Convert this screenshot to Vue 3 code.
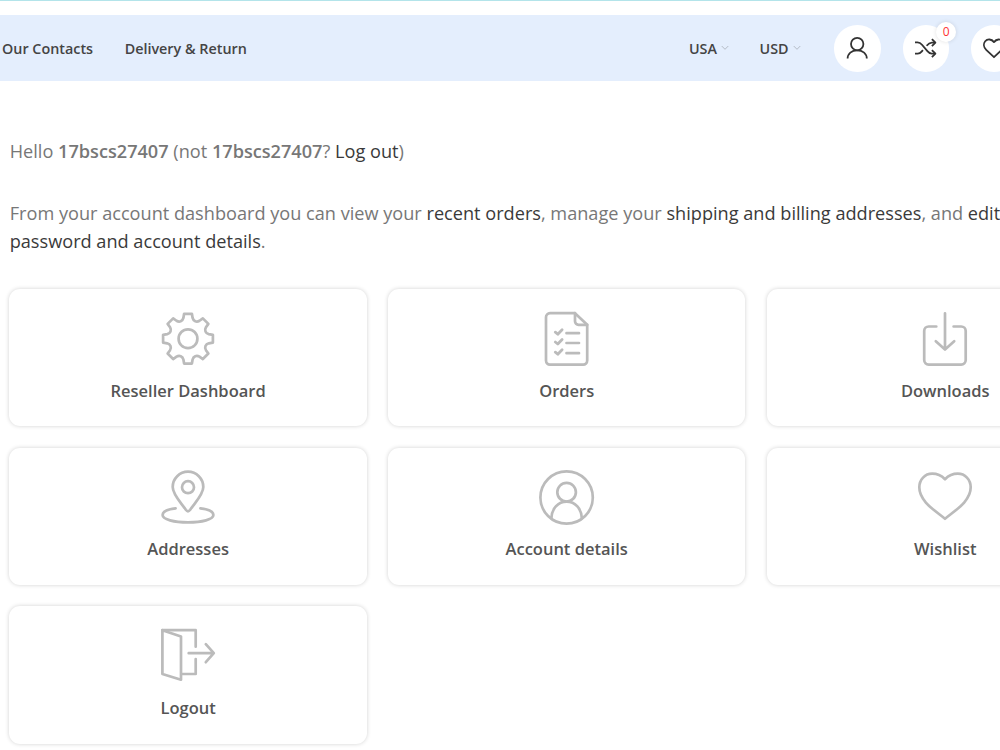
<script setup>
const navLinks = ['Our Contacts', 'Delivery & Return'];
const switchers = ['USA', 'USD'];

const cards = [
    { id: 'reseller', label: 'Reseller Dashboard' },
    { id: 'orders', label: 'Orders' },
    { id: 'downloads', label: 'Downloads' },
    { id: 'addresses', label: 'Addresses' },
    { id: 'account', label: 'Account details' },
    { id: 'wishlist', label: 'Wishlist' },
    { id: 'logout', label: 'Logout' }
];

// Outline of the gear: one tooth and one notch, repeated every 45 degrees
const gearPath = () => {
    const point = (x, y, step) => {
        const a = (step * Math.PI) / 4;
        const px = 30 + x * Math.cos(a) - y * Math.sin(a);
        const py = 29.7 + x * Math.sin(a) + y * Math.cos(a);
        return `${px.toFixed(2)} ${py.toFixed(2)}`;
    };
    let d = `M${point(-3.9, -24.9, 0)}`;
    for (let i = 0; i < 8; i++) {
        d += `L${point(3.9, -24.9, i)}L${point(4.6, -20.8, i)}`;
        d += `C${point(5.4, -17.5, i)} ${point(-5.4, -17.5, i + 1)} ${point(-4.6, -20.8, i + 1)}`;
        d += `L${point(-3.9, -24.9, i + 1)}`;
    }
    return d + 'Z';
};
</script>

<template>
    <div class="page">
        <div class="top-line"></div>

        <!-- Header -->
        <header class="header">
            <nav class="nav">
                <a v-for="link in navLinks" :key="link" href="#">{{ link }}</a>
            </nav>
            <div class="switchers">
                <a v-for="item in switchers" :key="item" href="#" class="switcher">
                    {{ item }}
                    <svg viewBox="0 0 8 6"><path d="M1 1.3l3 3 3-3" /></svg>
                </a>
            </div>
            <div class="tools">
                <a href="#" class="tool">
                    <svg viewBox="0 0 24 24">
                        <circle cx="12.2" cy="8.1" r="6.2" />
                        <path d="M2.6 22.6c0-5 4-8.3 9.6-8.3s9.6 3.3 9.6 8.3" />
                    </svg>
                </a>
                <a href="#" class="tool">
                    <svg viewBox="0 0 24 24">
                        <path d="M1 6.3H3.5c2.2 0 3.3.9 4.5 2.4l5.4 6.5c1.3 1.6 2.3 2.4 4.3 2.4h3.4" />
                        <path d="M1 17.6h2.7c1.8 0 2.9-.8 3.9-2l1.3-1.5M12.6 9.8c1.5-1.9 2.6-3.2 5.2-3.2h3.3" />
                        <path d="M17.9 3.1l3.5 3.5-3.5 3.5M17.9 14.1l3.5 3.5-3.5 3.5" />
                    </svg>
                    <span class="badge">0</span>
                </a>
                <a href="#" class="tool">
                    <svg viewBox="0 0 24 24">
                        <path d="M12 21.2L4.2 13.8C1.5 11.2 1.3 7.6 3.2 5.3c2.2-2.6 6.3-2.5 8.8.8 2.5-3.3 6.6-3.4 8.8-.8 1.9 2.3 1.7 5.9-1 8.5Z" />
                    </svg>
                </a>
            </div>
        </header>

        <!-- Account content -->
        <main class="content">
            <p class="hello">
                Hello <strong>17bscs27407</strong> (not <strong>17bscs27407</strong>? <a href="#">Log out</a>)
            </p>
            <p class="intro">
                From your account dashboard you can view your <a href="#">recent orders</a>, manage your
                <a href="#">shipping and billing addresses</a>, and <a href="#">edit your password and account details</a>.
            </p>

            <div class="cards">
                <a v-for="card in cards" :key="card.id" href="#" class="card">
                    <svg class="card-icon" viewBox="0 0 60 60">
                        <g v-if="card.id === 'reseller'">
                            <path :d="gearPath()" />
                            <circle cx="30" cy="29.7" r="9.4" />
                        </g>
                        <g v-else-if="card.id === 'orders'">
                            <path d="M38 4.2H13a4 4 0 0 0-4 4v43.4a4 4 0 0 0 4 4h33.2a4 4 0 0 0 4-4V15.8Z" />
                            <path d="M38 4.2v8.1a3.5 3.5 0 0 0 3.5 3.5h8.7" />
                            <path d="M29.5 24.2h12.5M29.5 34h12.5M29.5 44.2h12.5" />
                            <path class="ticks" d="M18.3 23.2l2.5 2 4.3-4.5M18.3 33l2.5 2 4.3-4.5M18.3 43.2l2.5 2 4.3-4.5" />
                        </g>
                        <g v-else-if="card.id === 'downloads'">
                            <path d="M21.3 17.5h-7.6a4.5 4.5 0 0 0-4.5 4.5v29.1a4.5 4.5 0 0 0 4.5 4.5h32.5a4.5 4.5 0 0 0 4.5-4.5V22a4.5 4.5 0 0 0-4.5-4.5h-7.6" />
                            <path d="M30 4.3v36M20.8 32.2L30 40.5l9.2-8.3" />
                        </g>
                        <g v-else-if="card.id === 'addresses'">
                            <path d="M30 43.3c-1 0-1.6-.8-2.2-1.6C22.8 34.4 14.7 26.5 14.7 19a15.3 15.3 0 0 1 30.6 0c0 7.5-8.1 15.4-13.1 22.7-.6.8-1.2 1.6-2.2 1.6Z" />
                            <circle cx="30" cy="19.2" r="6" />
                            <path d="M17.6 40.3C9 41.3 4.6 44 4.6 47c0 4.5 11.4 7.3 25.4 7.3S55.4 51.5 55.4 47c0-3-4.4-5.7-13-6.7" />
                        </g>
                        <g v-else-if="card.id === 'account'">
                            <circle cx="29.6" cy="29.5" r="26.2" />
                            <circle cx="29.6" cy="24.2" r="9.3" />
                            <path d="M14.4 50.3c.3-9.5 6.5-16.6 15.2-16.6s14.9 7.1 15.2 16.6" />
                        </g>
                        <g v-else-if="card.id === 'wishlist'">
                            <path d="M30 50.8C20.5 42.8 4.3 33.5 4.3 19.3 4.3 11.5 10 5.7 17.2 5.7c6 0 10 2.7 12.8 5.5 2.8-2.8 6.8-5.5 12.8-5.5 7.2 0 12.9 5.8 12.9 13.6 0 14.2-16.2 23.5-25.7 31.5Z" />
                        </g>
                        <g v-else>
                            <path d="M4.4 4.2L23 10.5v43.2L4.4 48Z" />
                            <path d="M4.4 4.2h33.3v16.5M23.5 48h14.2V33" />
                            <path d="M30.7 27.2h24.6M47.8 18.2l8 9-8 9" />
                        </g>
                    </svg>
                    <span class="card-label">{{ card.label }}</span>
                </a>
            </div>
        </main>
    </div>
</template>

<style>
body {
    background: #fff;
    overflow: hidden;
}
</style>

<style scoped>
.page {
    width: 100%;
    height: 750px;
    overflow: hidden;
    font-family: "Open Sans", "Noto Sans", sans-serif;
    color: #777;
}

a {
    color: #333;
    text-decoration: none;
}

svg {
    display: block;
    fill: none;
    stroke: currentColor;
    stroke-linecap: round;
    stroke-linejoin: round;
}

.top-line {
    height: 1px;
    margin-bottom: 14.4px;
    background: #b3e4ea;
}

/* Header */
.header {
    display: flex;
    align-items: center;
    box-sizing: border-box;
    width: 1017.3px;
    height: 66px;
    padding-left: 2px;
    background: #e4eefd;
    font-size: 14.35px;
    font-weight: 600;
}

.nav {
    display: flex;
    gap: 31.6px;
}

.nav a,
.switcher {
    color: #444;
    white-space: nowrap;
}

.switchers {
    display: flex;
    gap: 30.6px;
    margin-left: auto;
}

.switcher {
    display: flex;
    align-items: center;
    gap: 4px;
}

.switcher svg {
    width: 8px;
    height: 6px;
    color: #b4bbc6;
}

.tools {
    display: flex;
    gap: 22px;
    margin-left: 33.5px;
}

.tool {
    position: relative;
    display: flex;
    align-items: center;
    justify-content: center;
    width: 46.4px;
    height: 46.4px;
    border-radius: 50%;
    background: #fff;
}

.tool svg {
    width: 24px;
    height: 24px;
    stroke-width: 1.8;
    stroke-linecap: butt;
}

.badge {
    position: absolute;
    top: -3.4px;
    right: -7.4px;
    width: 20px;
    height: 20px;
    border-radius: 50%;
    background: #fff;
    box-shadow: 0 0 4px rgba(0, 0, 0, 0.12);
    color: #f33;
    font-size: 12px;
    font-weight: 400;
    line-height: 20px;
    text-align: center;
}

/* Content */
.content {
    width: 1116px;
    padding: 55.8px 0 0 9.7px;
    font-size: 18.15px;
    line-height: 28.2px;
}

.content p {
    margin: 0;
}

.content .intro {
    width: 1080px;
    margin: 33.7px 0 33.6px;
}

.content p a {
    color: #3a3a3a;
}

strong {
    font-weight: 600;
}

/* Cards */
.cards {
    display: grid;
    grid-template-columns: repeat(3, 357.4px);
    gap: 21.2px;
    margin-left: -0.3px;
}

.card {
    display: flex;
    flex-direction: column;
    align-items: center;
    box-sizing: border-box;
    height: 137.4px;
    padding-top: 19.9px;
    border-radius: 11px;
    background: #fff;
    box-shadow: 0 0 4px rgba(0, 0, 0, 0.18);
}

.card-icon {
    width: 60px;
    height: 60px;
    color: #bbb;
    stroke-width: 2.7;
}

.ticks {
    stroke-width: 2.8;
}

.card-label {
    margin-top: 7.8px;
    color: #555;
    font-size: 16.5px;
    font-weight: 600;
    line-height: 28px;
}
</style>
